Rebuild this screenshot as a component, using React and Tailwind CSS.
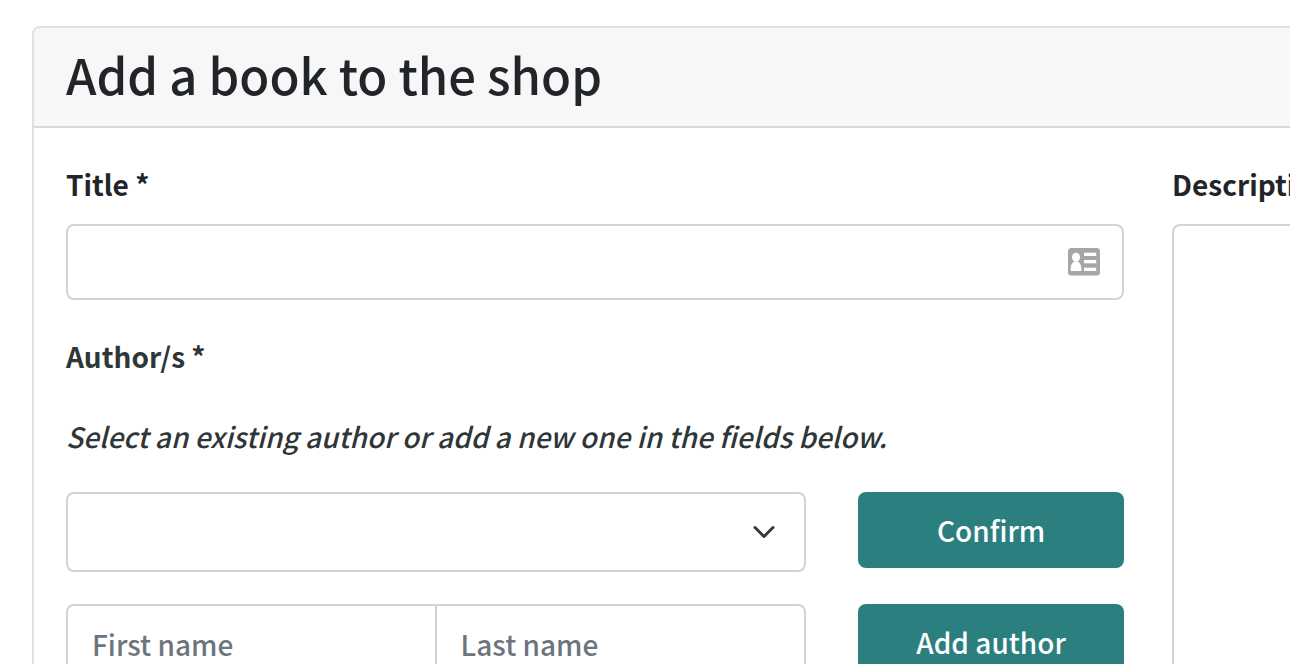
function ContactCardIcon() {
  return (
    <svg width="32" height="28" viewBox="0 0 32 28" aria-hidden="true">
      <rect width="32" height="27.5" rx="3.5" fill="#a6a6a6" />
      <g fill="#fff">
        <ellipse cx="8" cy="9.2" rx="4" ry="4.5" />
        <path d="M2.7 23v-2.600c0-3.600 1.500-6 3.600-6.900h3.400c2.100.9 3.600 3.300 3.600 6.900V23z" />
        <rect x="16" y="4.700" width="12.200" height="3.300" />
        <rect x="16" y="12" width="12.200" height="3.300" />
        <rect x="16" y="19.700" width="12.200" height="3.300" />
      </g>
    </svg>
  );
}

function ChevronIcon() {
  return (
    <svg width="24" height="24" viewBox="0 0 16 16" fill="none" aria-hidden="true">
      <path d="m2 5 6 6 6-6" stroke="#343a40" strokeWidth="2" strokeLinecap="round" strokeLinejoin="round" />
    </svg>
  );
}

const field = "w-full min-w-0 border-2 border-[#ced4da] bg-white px-6 text-[28px] font-medium text-[#212529] outline-none placeholder:text-[#6c757d] placeholder:opacity-100";
const button = "h-[76px] w-[266px] shrink-0 rounded-lg bg-[#2b807f] text-[28px] font-medium text-white";

export default function App() {
  return (
    <div className="h-screen overflow-hidden bg-white font-['Noto_Sans_CJK_SC',sans-serif] text-[28px] leading-[48px] font-medium text-[#212529]">
      <main className="w-[178%] px-8 pt-[26px]">
        <section className="overflow-hidden rounded-lg border-2 border-[#dfdfdf]">
          <header className="border-b-2 border-[#d8d8d8] bg-[#f7f7f7] px-8 pt-[13px] pb-[19px]">
            <h1 className="text-[49px] leading-[66px] font-medium">Add a book to the shop</h1>
          </header>
          <form className="grid grid-cols-2 gap-12 p-8" onSubmit={(e) => e.preventDefault()}>
            <div>
              <label htmlFor="title" className="block font-bold">Title *</label>
              <div className="relative mt-4">
                <input id="title" type="text" className={`${field} block h-[76px] rounded-lg pr-16`} />
                <button type="button" aria-label="Fill from contacts" className="absolute top-6 right-6">
                  <ContactCardIcon />
                </button>
              </div>
              <fieldset className="mt-8">
                <legend className="font-bold text-[#2f3638]">Author/s *</legend>
                <p className="mt-8 text-[#2f3638] italic">Select an existing author or add a new one in the fields below.</p>
                <div className="mt-8 flex items-start gap-[52px]">
                  <div className="relative flex-1">
                    <select aria-label="Existing author" className={`${field} block h-20 appearance-none rounded-lg`} />
                    <span className="pointer-events-none absolute inset-y-0 right-[30px] flex items-center">
                      <ChevronIcon />
                    </span>
                  </div>
                  <button type="button" className={button}>Confirm</button>
                </div>
                <div className="mt-8 flex items-start gap-[52px]">
                  <div className="flex flex-1">
                    <input type="text" aria-label="First name" placeholder="First name" className={`${field} h-20 rounded-l-lg`} />
                    <input type="text" aria-label="Last name" placeholder="Last name" className={`${field} h-20 rounded-r-lg border-l-0`} />
                  </div>
                  <button type="button" className={button}>Add author</button>
                </div>
              </fieldset>
            </div>
            <div className="flex flex-col">
              <label htmlFor="description" className="font-bold">Description *</label>
              <textarea id="description" className={`${field} mt-4 min-h-[560px] flex-1 resize-none rounded-lg`} />
            </div>
          </form>
        </section>
      </main>
    </div>
  );
}
